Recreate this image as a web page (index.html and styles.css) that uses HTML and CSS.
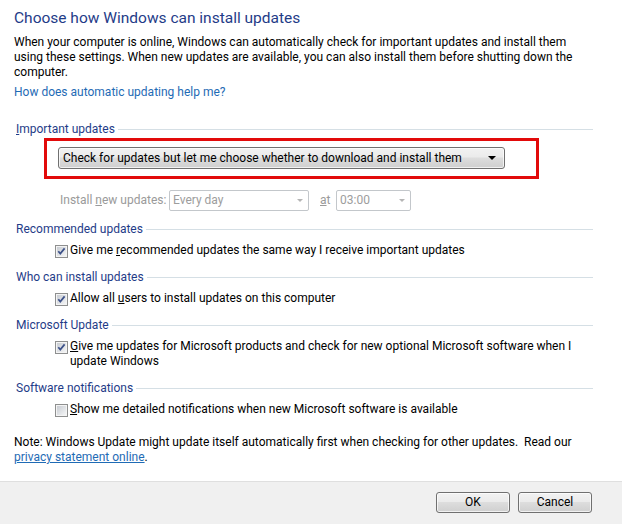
FILE: index.html
```html
<!DOCTYPE html>
<html lang="en">
<head>
<meta charset="utf-8">
<title>Choose how Windows can install updates</title>
<link rel="stylesheet" href="styles.css">
</head>
<body>
<div class="page">
  <div class="content">
    <h1 class="title">Choose how Windows can install updates</h1>
    <p class="intro">When your computer is online, Windows can automatically check for important updates and install them<br>using these settings. When new updates are available, you can also install them before shutting down the<br>computer.</p>
    <a class="link help" href="#">How does automatic updating help me?</a>

    <div class="group-head first"><span><u>I</u>mportant updates</span><span class="rule"></span></div>
    <div class="highlight">
      <div class="dropdown"><span>Check for updates but let me choose whether to download and install them</span><span class="arrow"></span></div>
    </div>
    <div class="schedule">
      <span class="sched-label">Install <u>n</u>ew updates:</span>
      <span class="combo combo-day"><span>Every day</span><span class="arrow"></span></span>
      <span class="at"><u>a</u>t</span>
      <span class="combo combo-time"><span>03:00</span><span class="arrow"></span></span>
    </div>

    <div class="group-head"><span>Recommended updates</span><span class="rule"></span></div>
    <div class="check-row">
      <svg class="checkbox" width="13" height="13" viewBox="0 0 13 13"><defs><linearGradient id="g1" x1="0" y1="0" x2="1" y2="1"><stop offset="0" stop-color="#c8ccd2"/><stop offset="1" stop-color="#f4f5f6"/></linearGradient></defs><rect x="0.5" y="0.5" width="12" height="12" fill="#f4f4f4" stroke="#8e8f8f"/><rect x="2" y="2" width="9" height="9" fill="url(#g1)"/><path d="M3.3 6.3 L5.3 8.6 L9.6 3.4" fill="none" stroke="#3c5189" stroke-width="1.7"/></svg>
      <span>Give me <u>r</u>ecommended updates the same way I receive important updates</span>
    </div>

    <div class="group-head"><span>Who can install updates</span><span class="rule"></span></div>
    <div class="check-row">
      <svg class="checkbox" width="13" height="13" viewBox="0 0 13 13"><defs><linearGradient id="g2" x1="0" y1="0" x2="1" y2="1"><stop offset="0" stop-color="#c8ccd2"/><stop offset="1" stop-color="#f4f5f6"/></linearGradient></defs><rect x="0.5" y="0.5" width="12" height="12" fill="#f4f4f4" stroke="#8e8f8f"/><rect x="2" y="2" width="9" height="9" fill="url(#g2)"/><path d="M3.3 6.3 L5.3 8.6 L9.6 3.4" fill="none" stroke="#3c5189" stroke-width="1.7"/></svg>
      <span>Allow all <u>u</u>sers to install updates on this computer</span>
    </div>

    <div class="group-head"><span>Microsoft Update</span><span class="rule"></span></div>
    <div class="check-row">
      <svg class="checkbox" width="13" height="13" viewBox="0 0 13 13"><defs><linearGradient id="g3" x1="0" y1="0" x2="1" y2="1"><stop offset="0" stop-color="#c8ccd2"/><stop offset="1" stop-color="#f4f5f6"/></linearGradient></defs><rect x="0.5" y="0.5" width="12" height="12" fill="#f4f4f4" stroke="#8e8f8f"/><rect x="2" y="2" width="9" height="9" fill="url(#g3)"/><path d="M3.3 6.3 L5.3 8.6 L9.6 3.4" fill="none" stroke="#3c5189" stroke-width="1.7"/></svg>
      <span><u>G</u>ive me updates for Microsoft products and check for new optional Microsoft software when I<br>update Windows</span>
    </div>

    <div class="group-head"><span>Software notifications</span><span class="rule"></span></div>
    <div class="check-row">
      <svg class="checkbox" width="13" height="13" viewBox="0 0 13 13"><defs><linearGradient id="g4" x1="0" y1="0" x2="1" y2="1"><stop offset="0" stop-color="#c8ccd2"/><stop offset="1" stop-color="#f4f5f6"/></linearGradient></defs><rect x="0.5" y="0.5" width="12" height="12" fill="#f4f4f4" stroke="#8e8f8f"/><rect x="2" y="2" width="9" height="9" fill="url(#g4)"/></svg>
      <span><u>S</u>how me detailed notifications when new Microsoft software is available</span>
    </div>

    <p class="note">Note: Windows Update might update itself automatically first when checking for other updates.&nbsp; Read our<br><a class="link underline" href="#">privacy statement online</a>.</p>
  </div>
  <div class="footer">
    <button class="btn">OK</button>
    <button class="btn">Cancel</button>
  </div>
</div>
</body>
</html>
```

FILE: styles.css
```css
* { box-sizing: border-box; }
html, body { margin: 0; padding: 0; }
body {
  width: 622px;
  height: 524px;
  overflow: hidden;
  background: #fff;
  font-family: Roboto, "Liberation Sans", sans-serif;
  font-size: 12px;
  line-height: 15px;
  color: #000;
}
.page { display: flex; flex-direction: column; height: 524px; }
.content { flex: 1; padding: 8px 29px 0 14px; }
.title {
  margin: 0;
  font-size: 15.5px;
  line-height: 20px;
  font-weight: normal;
  color: #1f3c88;
}
.intro { margin: 7px 0 0; }
.link { color: #1f6bb5; text-decoration: none; }
.underline { text-decoration: underline; }
.help { display: block; margin-top: 5px; }

.group-head {
  display: flex;
  align-items: center;
  margin: 12px 0 0 2px;
  color: #1f3c88;
  white-space: nowrap;
}
.group-head.first { margin-top: 22px; }
.group-head .rule { flex: 1; height: 1px; background: #d5dfe5; margin-left: 3px; }

.highlight {
  margin: 1px 0 0 30px;
  width: 495px;
  height: 41px;
  border: 3px solid #e20a0a;
  padding: 6px 0 0 11px;
}
.dropdown {
  width: 447px;
  height: 22px;
  display: flex;
  align-items: center;
  padding-left: 4px;
  border: 1px solid #707070;
  border-radius: 3px;
  background: linear-gradient(#f2f2f2 0%, #ebebeb 45%, #dddddd 50%, #cfcfcf 100%);
  box-shadow: inset 0 0 0 1px rgba(255,255,255,0.7);
  white-space: nowrap;
}
.dropdown .arrow {
  margin-left: auto;
  margin-right: 8px;
  width: 0; height: 0;
  border-left: 4px solid transparent;
  border-right: 4px solid transparent;
  border-top: 4px solid #000;
}

.schedule {
  display: flex;
  align-items: center;
  height: 21px;
  margin-top: 11px;
  padding-left: 46px;
  color: #9a9a9a;
  white-space: nowrap;
}
.schedule + .group-head { margin-top: 11px; }
.sched-label { width: 109px; }
.combo {
  display: flex;
  align-items: center;
  height: 21px;
  padding-left: 3px;
  border: 1px solid #c3c7cb;
  border-radius: 2px;
  background: #fff;
  color: #9d9d9d;
}
.combo .arrow {
  margin-left: auto;
  margin-right: 5px;
  width: 0; height: 0;
  border-left: 3px solid transparent;
  border-right: 3px solid transparent;
  border-top: 3px solid #b5b5b5;
}
.combo-day { width: 140px; }
.combo-time { width: 75px; }
.at { width: 16px; margin-left: 11px; }

.check-row {
  display: flex;
  align-items: flex-start;
  margin: 6px 0 0 41px;
}
.checkbox { flex: none; margin: 2px 2px 0 0; }

.note { margin: 18px 0 0; }

.footer {
  height: 43px;
  border-top: 1px solid #dfdfdf;
  background: #f0f0f0;
  display: flex;
  justify-content: flex-end;
  align-items: flex-start;
  gap: 8px;
  padding: 10px 30px 0 0;
}
.btn {
  width: 74px;
  height: 21px;
  padding: 0;
  border: 1px solid #707070;
  border-radius: 3px;
  background: linear-gradient(#f2f2f2 0%, #ebebeb 45%, #dddddd 50%, #cfcfcf 100%);
  box-shadow: inset 0 0 0 1px rgba(255,255,255,0.7);
  font: inherit;
  color: #000;
}
```
